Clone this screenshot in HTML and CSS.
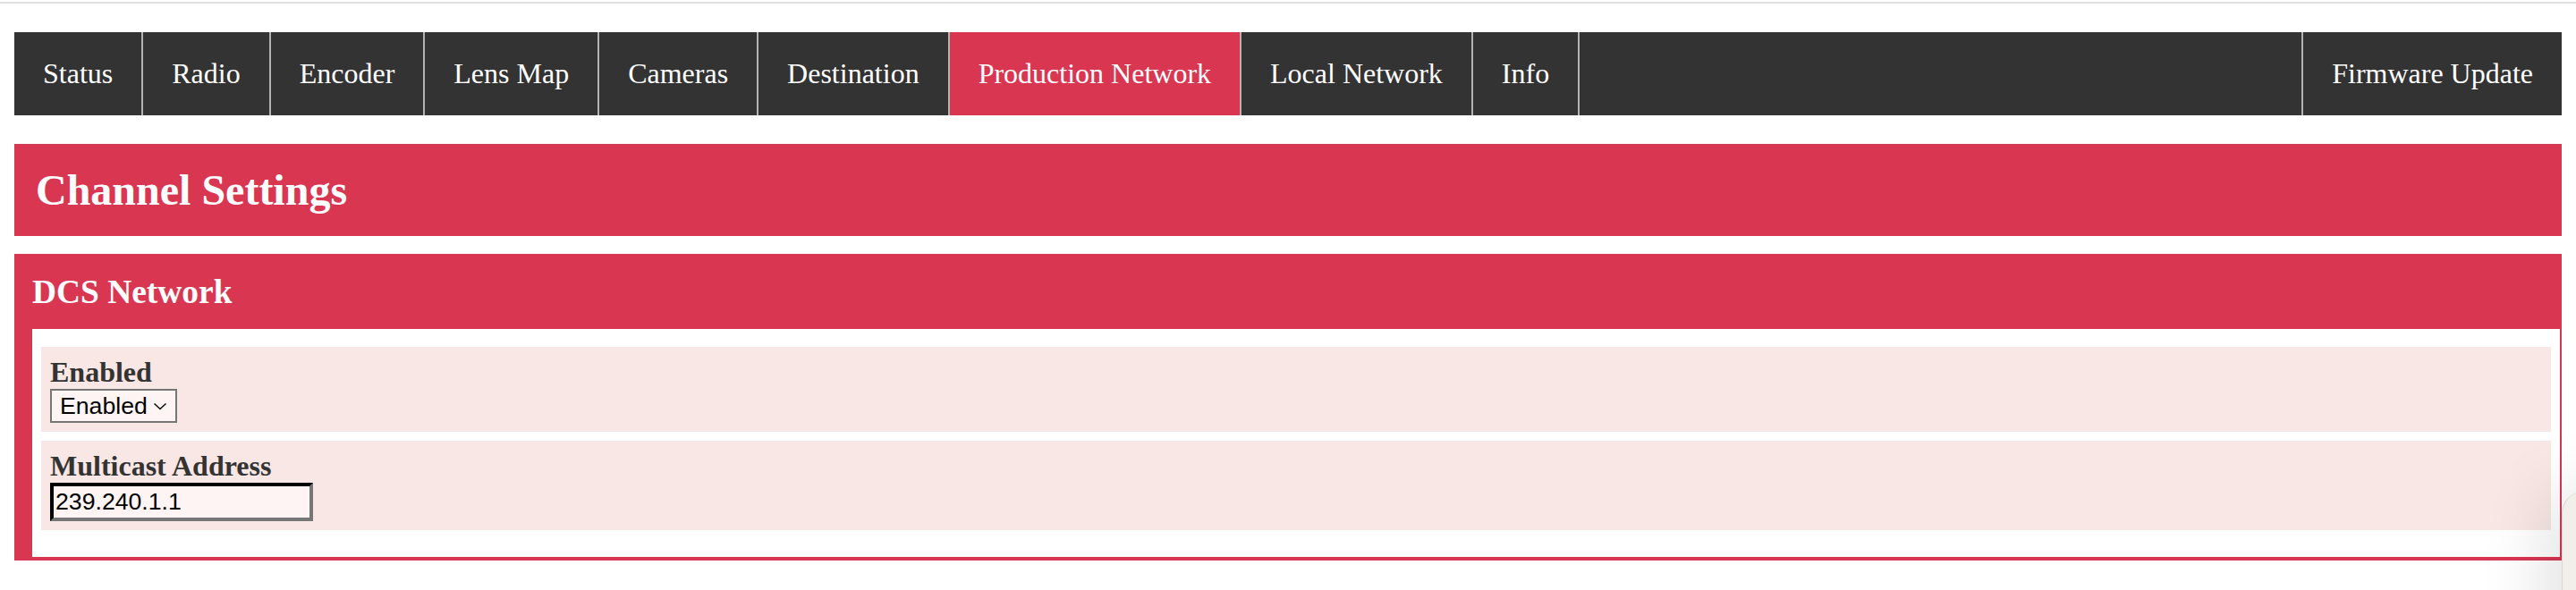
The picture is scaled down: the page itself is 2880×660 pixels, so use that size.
FILE: index.html
```html
<!DOCTYPE html>
<html lang="en">

<head>
   <meta charset="UTF-8">
   <meta name="viewport" content="width=device-width, initial-scale=1.0">
   <title>Production Network</title>
   <link rel="stylesheet" href="styles.css">
</head>

<body>
   <div class="topline"></div>

   <div class="page">
      <nav class="tabs">
         <a href="#" class="tabs__item">Status</a>
         <a href="#" class="tabs__item">Radio</a>
         <a href="#" class="tabs__item">Encoder</a>
         <a href="#" class="tabs__item">Lens Map</a>
         <a href="#" class="tabs__item">Cameras</a>
         <a href="#" class="tabs__item">Destination</a>
         <a href="#" class="tabs__item tabs__item--active">Production Network</a>
         <a href="#" class="tabs__item">Local Network</a>
         <a href="#" class="tabs__item">Info</a>
         <a href="#" class="tabs__item tabs__item--right">Firmware Update</a>
      </nav>

      <h2 class="banner">Channel Settings</h2>

      <section class="panel">
         <h3 class="panel__title">DCS Network</h3>

         <div class="panel__body">
            <div class="field">
               <label class="field__label" for="dcs-enabled">Enabled</label>
               <span class="select">
                  <select id="dcs-enabled" class="select__control">
                     <option selected>Enabled</option>
                     <option>Disabled</option>
                  </select>
                  <svg class="select__arrow" width="16" height="9" viewBox="0 0 16 9">
                     <path d="M1.5 1.5 L8 7.5 L14.5 1.5" fill="none" stroke="#111" stroke-width="1.6" />
                  </svg>
               </span>
            </div>

            <div class="field">
               <label class="field__label" for="dcs-multicast">Multicast Address</label>
               <input id="dcs-multicast" class="field__input" type="text" value="239.240.1.1">
            </div>
         </div>
      </section>
   </div>

   <!-- floating helper tab at the right edge -->
   <div class="side-tab"></div>
</body>

</html>
```

FILE: styles.css
```css
*,
*::before,
*::after {
   box-sizing: border-box;
}

html,
body {
   margin: 0;
   padding: 0;
   background-color: #ffffff;
   font-family: "Liberation Serif", "Times New Roman", serif;
   overflow: hidden;
}

.topline {
   height: 2px;
   margin-top: 2px;
   background-color: #e1e1e1;
}

.page {
   padding: 32px 16px 0;
}

/* top tabs */
.tabs {
   display: flex;
   height: 93px;
   background-color: #333333;
}

.tabs__item {
   display: flex;
   align-items: center;
   padding: 0 32px;
   border-right: 2px solid #b3b3b3;
   color: #ffffff;
   font-size: 32px;
   text-decoration: none;
   white-space: nowrap;
}

.tabs__item--active {
   background-color: #d93652;
}

.tabs__item--right {
   margin-left: auto;
   border-right: none;
   border-left: 2px solid #b3b3b3;
}

.banner {
   margin: 32px 0 20px;
   padding: 24px;
   background-color: #d93652;
   color: #ffffff;
   font-size: 48px;
   line-height: 55px;
   font-weight: bold;
}

/* settings group */
.panel {
   padding: 0 2px 4px 20px;
   background-color: #d93652;
}

.panel__title {
   margin: 0;
   padding: 21px 0 20px;
   color: #ffffff;
   font-size: 37.44px;
   line-height: 43px;
   font-weight: bold;
}

.panel__body {
   display: flex;
   flex-direction: column;
   gap: 10px;
   padding: 20px 10px 30px;
   background-color: #ffffff;
}

.field {
   display: flex;
   flex-direction: column;
   align-items: flex-start;
   padding: 10px;
   background-color: #f8e7e4;
}

.field__label {
   color: #333333;
   font-size: 32px;
   line-height: 37px;
   font-weight: bold;
}

.select {
   position: relative;
   display: inline-block;
}

.select__control {
   appearance: none;
   width: 142px;
   height: 38px;
   margin: 0;
   padding: 0 0 0 9px;
   border: 2px solid #767676;
   border-radius: 0;
   background-color: #fdf4f3;
   color: #000000;
   font-family: "Liberation Sans", Arial, sans-serif;
   font-size: 26.67px;
}

.select__arrow {
   position: absolute;
   top: 15px;
   left: 115px;
   pointer-events: none;
}

.field__input {
   width: 294px;
   height: 43px;
   margin: 0;
   padding: 0 2px;
   border: 4px inset #767676;
   border-top-color: #1f1f1f;
   border-left-color: #1f1f1f;
   background-color: #fdf4f3;
   color: #000000;
   font-family: "Liberation Sans", Arial, sans-serif;
   font-size: 26.67px;
}

.side-tab {
   position: fixed;
   top: 550px;
   left: 2864px;
   width: 60px;
   height: 200px;
   border-left: 1px solid #dcd8d4;
   border-top: 1px solid #e4e0dc;
   border-radius: 24px 0 0 0;
   background-color: #f2eeea;
   box-shadow: -8px 0 80px rgba(0, 0, 0, 0.16);
}
```
